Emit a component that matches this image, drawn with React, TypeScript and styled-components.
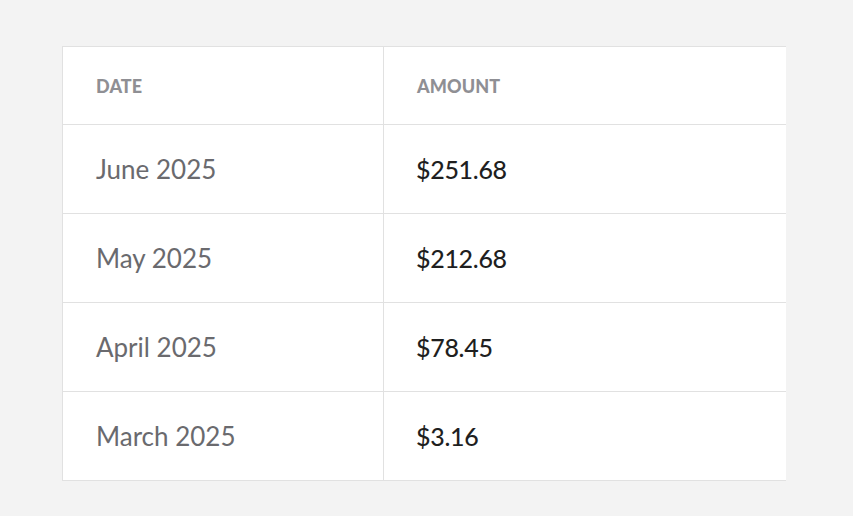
import styled, { createGlobalStyle } from 'styled-components';

const GlobalStyle = createGlobalStyle`
  html, body {
    margin: 0;
    background: #f3f3f3;
  }
  body {
    font-family: Lato, "Open Sans", sans-serif;
  }
`;

const Page = styled.main`
  width: 853px;
  height: 516px;
  box-sizing: border-box;
  padding: 46px 0 0 62px;
  overflow: hidden;
`;

const Table = styled.table`
  width: 724px;
  border-collapse: collapse;
  background: #fff;
  border: 1px solid #e1e1e1;
  border-right: none;
  table-layout: fixed;
`;

const HeadCell = styled.th`
  height: 77px;
  padding: 0 33px;
  text-align: left;
  font-size: 18px;
  font-weight: 900;
  letter-spacing: 0.1px;
  text-transform: uppercase;
  color: #8f8f94;
  border-bottom: 1px solid #e1e1e1;
  border-right: 1px solid #e1e1e1;
  &:last-child {
    border-right: none;
  }
`;

const Cell = styled.td<{ $strong?: boolean }>`
  height: 88px;
  padding: 0 33px;
  font-size: ${(p) => (p.$strong ? '25px' : '26px')};
  font-weight: ${(p) => (p.$strong ? 500 : 400)};
  letter-spacing: ${(p) => (p.$strong ? '-0.3px' : '0')};
  color: ${(p) => (p.$strong ? '#1f1f1f' : '#6a6a6e')};
  border-bottom: 1px solid #e1e1e1;
  border-right: 1px solid #e1e1e1;
  &:last-child {
    border-right: none;
    padding-left: 32px;
  }
`;

const rows = [
  { date: 'June 2025', amount: '$251.68' },
  { date: 'May 2025', amount: '$212.68' },
  { date: 'April 2025', amount: '$78.45' },
  { date: 'March 2025', amount: '$3.16' },
];

export default function App() {
  return (
    <Page>
      <GlobalStyle />
      <Table>
        <colgroup>
          <col style={{ width: 321 }} />
          <col />
        </colgroup>
        <thead>
          <tr>
            <HeadCell>Date</HeadCell>
            <HeadCell>Amount</HeadCell>
          </tr>
        </thead>
        <tbody>
          {rows.map((r) => (
            <tr key={r.date}>
              <Cell>{r.date}</Cell>
              <Cell $strong>{r.amount}</Cell>
            </tr>
          ))}
        </tbody>
      </Table>
    </Page>
  );
}
